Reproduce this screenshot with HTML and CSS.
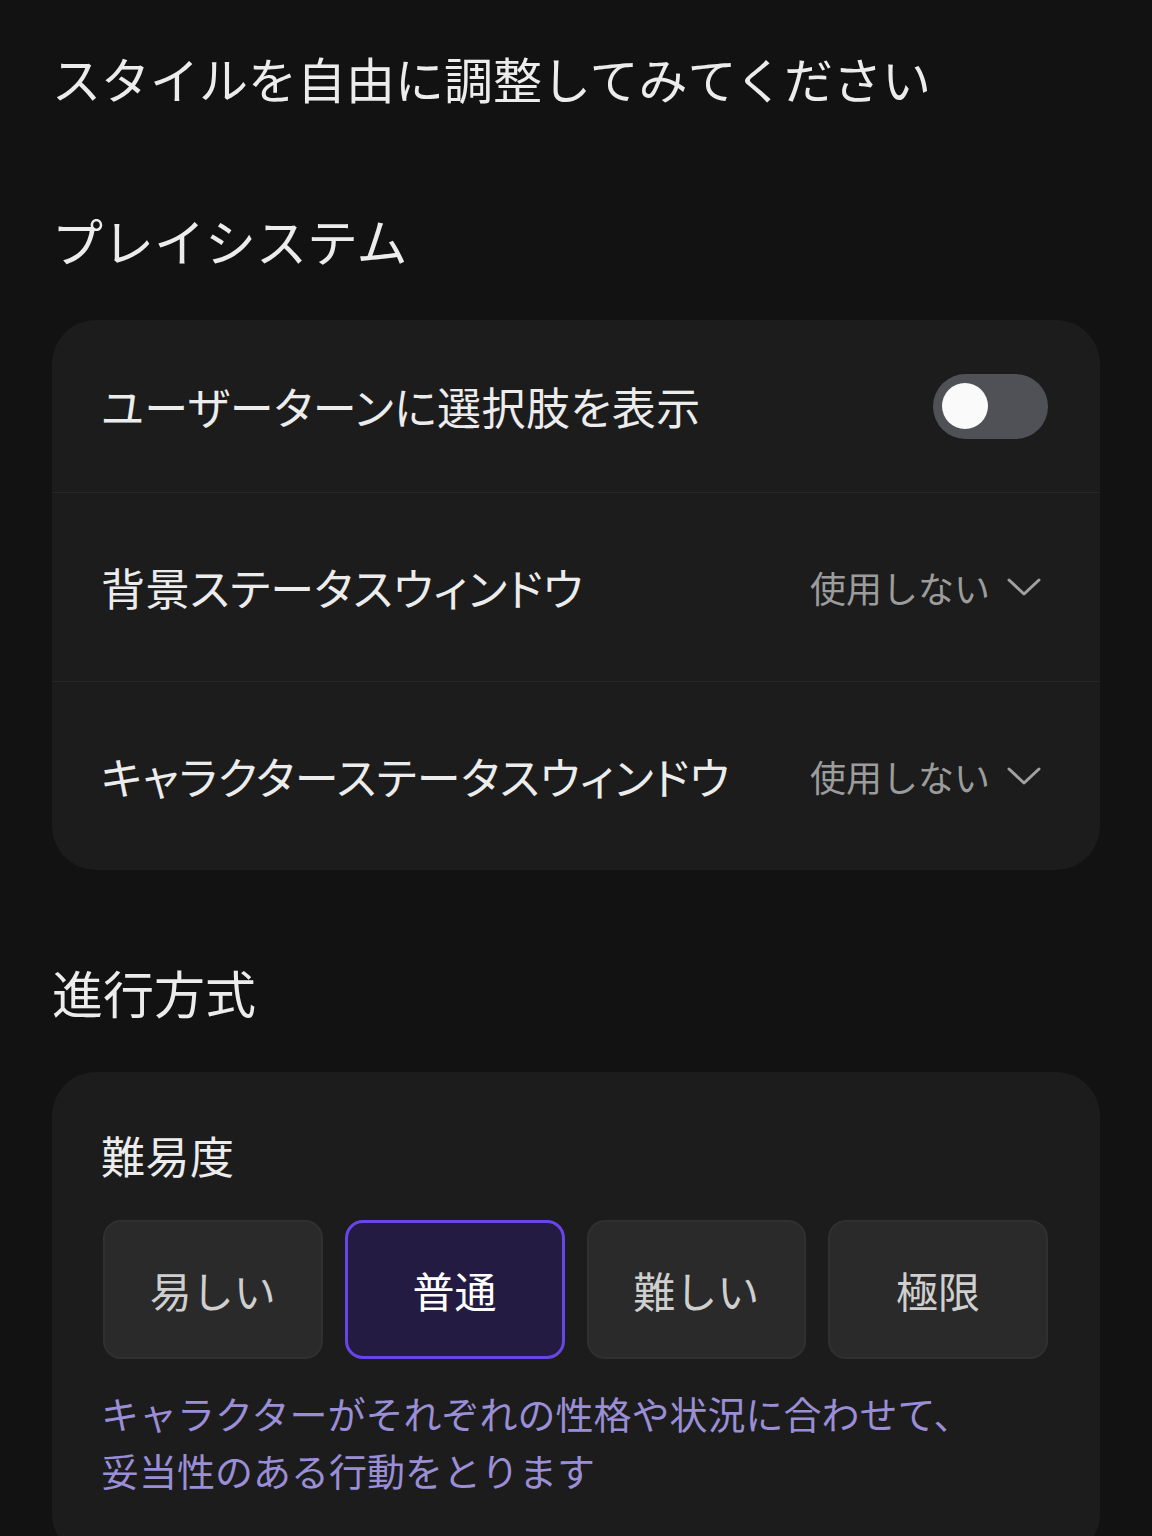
FILE: index.html
```html
<!DOCTYPE html>
<html lang="ja">

<head>
    <meta charset="UTF-8">
    <meta name="viewport" content="width=device-width, initial-scale=1.0">
    <title>スタイル設定</title>
    <link rel="stylesheet" href="styles.css">
</head>

<body>
    <div class="page">
        <h1 class="title">スタイルを自由に調整してみてください</h1>

        <h2 class="section">プレイシステム</h2>
        <div class="card">
            <div class="row first">
                <span class="label">ユーザーターンに選択肢を表示</span>
                <div class="toggle">
                    <div class="knob"></div>
                </div>
            </div>
            <div class="row">
                <span class="label">背景ステータスウィンドウ</span>
                <div class="select">
                    <span>使用しない</span>
                    <svg width="36" height="22" viewBox="0 0 36 22">
                        <polyline points="3,4 18,18 33,4" fill="none" stroke="#a0a0a0" stroke-width="3" stroke-linecap="round" stroke-linejoin="round" />
                    </svg>
                </div>
            </div>
            <div class="row">
                <span class="label">キャラクターステータスウィンドウ</span>
                <div class="select">
                    <span>使用しない</span>
                    <svg width="36" height="22" viewBox="0 0 36 22">
                        <polyline points="3,4 18,18 33,4" fill="none" stroke="#a0a0a0" stroke-width="3" stroke-linecap="round" stroke-linejoin="round" />
                    </svg>
                </div>
            </div>
        </div>

        <h2 class="section">進行方式</h2>
        <div class="card pad">
            <div class="label">難易度</div>
            <div class="levels">
                <button class="level">易しい</button>
                <button class="level active">普通</button>
                <button class="level">難しい</button>
                <button class="level">極限</button>
            </div>
            <p class="desc">キャラクターがそれぞれの性格や状況に合わせて、<br>妥当性のある行動をとります</p>
        </div>
    </div>
</body>

</html>
```

FILE: styles.css
```css
body {
    margin: 0;
    background-color: #121212;
    color: #ececec;
    font-family: "Noto Sans CJK JP", "Noto Sans", sans-serif;
}

.page {
    padding: 42px 52px 0 52px;
}

.title {
    margin: 0;
    font-size: 49px;
    font-weight: 400;
    line-height: 72px;
}

.section {
    margin: 90px 0 44px 0;
    font-size: 51px;
    font-weight: 400;
    line-height: 72px;
}

.card + .section {
    margin-top: 86px;
}

.card {
    background-color: #1c1c1c;
    border-radius: 44px;
}

.row {
    display: flex;
    align-items: center;
    justify-content: space-between;
    height: 188px;
    padding: 0 52px 0 49px;
    border-top: 1px solid #262626;
}

.row.first {
    height: 172px;
    border-top: none;
}

.label {
    font-size: 44px;
    font-weight: 400;
    line-height: 66px;
    font-feature-settings: "palt";
    letter-spacing: 0.5px;
}

.toggle {
    width: 115px;
    height: 65px;
    border-radius: 33px;
    background-color: #505156;
    display: flex;
    align-items: center;
    padding-left: 9px;
    box-sizing: border-box;
}

.knob {
    width: 46px;
    height: 46px;
    border-radius: 50%;
    background-color: #fafafa;
}

.select {
    display: flex;
    align-items: center;
    gap: 16px;
    color: #9c9c9c;
    font-size: 36px;
    margin-right: 6px;
}

.card.pad {
    padding: 50px 52px 60px 49px;
}

.levels {
    display: grid;
    grid-template-columns: repeat(4, 1fr);
    gap: 22px;
    margin-top: 32px;
    padding-left: 2px;
}

.level {
    height: 139px;
    border-radius: 18px;
    background-color: #2a2a2a;
    border: 2px solid #303030;
    color: #cfcfcf;
    font-family: "Noto Sans CJK JP", sans-serif;
    font-size: 42px;
    font-weight: 400;
}

.level.active {
    background-color: #231b41;
    border: 3px solid #6a45e6;
    color: #ffffff;
}

.desc {
    margin: 25px 0 0 0;
    color: #9a8ed6;
    font-size: 38px;
    font-weight: 400;
    line-height: 57px;
}
```
